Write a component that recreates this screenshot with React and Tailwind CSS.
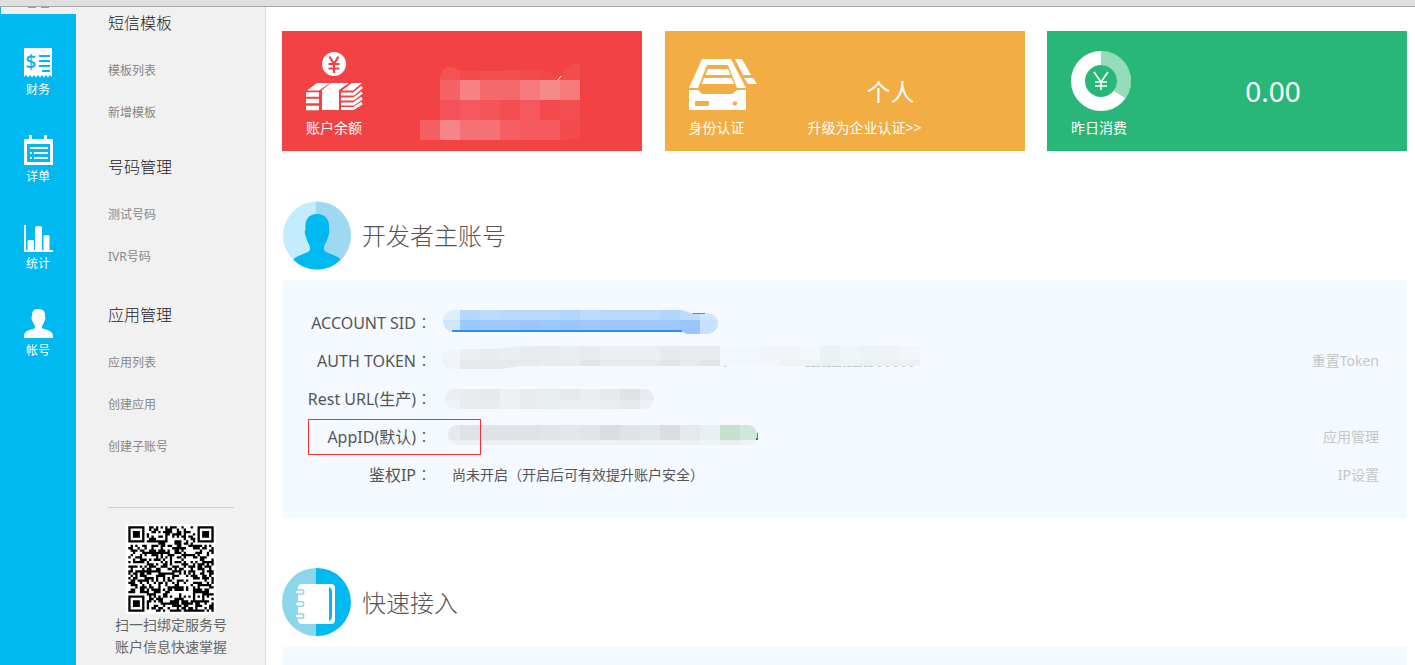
import React from "react";

const navItems = [
  { label: "财务", icon: FinanceIcon },
  { label: "详单", icon: DetailIcon },
  { label: "统计", icon: StatsIcon },
  { label: "帐号", icon: AccountIcon },
];

const menuGroups = [
  { title: "短信模板", items: ["模板列表", "新增模板"] },
  { title: "号码管理", items: ["测试号码", "IVR号码"] },
  { title: "应用管理", items: ["应用列表", "创建应用", "创建子账号"] },
];

function FinanceIcon() {
  return (
    <svg width="30" height="30" viewBox="0 0 30 30" className="shrink-0" aria-hidden="true">
      <path
        d="M2 0H28Q29 0 29 1V29L27 27L25 29.5L23 27L21 29.5L19 27L17 29.5L15 27L13 29.5L11 27L9 29.5L7 27L5 29.5L3 27L1 29V1Q1 0 2 0Z"
        fill="#fff"
      />
      <text x="2.5" y="21" fontSize="19" fontWeight="600" fill="#00b9f1" fontFamily="Open Sans, sans-serif">$</text>
      <path d="M16 8H27M16 13H27M16 18H27M19 23H27" stroke="#00b9f1" strokeWidth="2" />
    </svg>
  );
}

function DetailIcon() {
  return (
    <svg width="30" height="30" viewBox="0 0 30 30" className="shrink-0" aria-hidden="true">
      <path d="M1 4H6V0H9V4H21V0H24V4H30V9H1Z" fill="#fff" />
      <path d="M2.500 8V28.500H28.500V8" fill="none" stroke="#fff" strokeWidth="3" />
      <path d="M7 13H25M11 18H25M11 23H25M7 18H9M7 23H9" stroke="#fff" strokeWidth="2" />
    </svg>
  );
}

function StatsIcon() {
  return (
    <svg width="30" height="30" viewBox="0 0 30 30" className="shrink-0" aria-hidden="true">
      <path d="M2 3V29H30" fill="none" stroke="#fff" strokeWidth="2" />
      <rect x="4.500" y="18" width="6.500" height="11" rx="1.500" fill="#fff" />
      <rect x="12" y="4" width="7" height="25" rx="2" fill="#fff" />
      <rect x="20.500" y="13" width="6" height="16" rx="1.500" fill="#fff" />
    </svg>
  );
}

function AccountIcon() {
  return (
    <svg width="30" height="30" viewBox="0 0 30 30" className="shrink-0" aria-hidden="true">
      <path
        d="M15 0C20 0 22 2 22 6C22 8 23 8 22 11C21 14 20 15 19 17V19C22 21 30 21 30 27V29H1V27C1 21 9 21 12 19V17C11 15 10 14 9 11C8 8 9 8 9 6C9 2 11 0 15 0Z"
        fill="#fff"
      />
    </svg>
  );
}

function BalanceIcon() {
  return (
    <svg width="70" height="60" viewBox="0 0 70 60" aria-hidden="true">
      <circle cx="28" cy="13" r="12" fill="#fff" />
      <path d="M23.500 5.500L28 13L32.500 5.500M28 13V22M22.500 13H33.500M22.500 17.500H33.500" fill="none" stroke="#f34243" strokeWidth="2.200" />
      <path d="M1 39.500L11 32H24L13 39.500ZM16 39L25 32H43L33 39V59H16Z" fill="#fff" />
      <path d="M36 39.500L46 32H56L47 39.500Z" fill="#fff" />
      <path d="M0 43.500H13M0 50H13M0 57H13" stroke="#fff" strokeWidth="4.500" />
      <path
        d="M35 43H47.500L56 36M35 48H47.500L56 41.500M35 53H47.500L56 47M35 57.500H47.500L56 52"
        fill="none"
        stroke="#fff"
        strokeWidth="2.800"
      />
    </svg>
  );
}

function IdentityIcon() {
  return (
    <svg width="70" height="60" viewBox="0 0 70 60" aria-hidden="true">
      <path d="M13 8H42L57 37H48L39 14H18L9 37H0Z" fill="#fff" />
      <path d="M19 18H39L41.500 24H16.500ZM15 27H42.500L45 33H12.500Z" fill="#fff" />
      <path d="M46 8H53L62 24H54ZM55 27H64L68 33H59Z" fill="#fff" />
      <path d="M0 39H9L13 43H43L48 39H57V59H0Z" fill="#fff" />
      <rect x="6" y="50" width="14" height="5" rx="1" fill="#f2ad44" />
      <circle cx="46" cy="52.500" r="2.200" fill="#f2ad44" />
    </svg>
  );
}

function ConsumeIcon() {
  return (
    <svg width="70" height="60" viewBox="0 0 70 60" aria-hidden="true">
      <circle cx="30" cy="30" r="23" fill="none" stroke="#fff" strokeWidth="14" />
      <path d="M30 0A30 30 0 0 1 54.500 47L43 39.500A16 16 0 0 0 30 14Z" fill="#29b779" />
      <path d="M30 0A30 30 0 0 1 54.500 47L43 39.500A16 16 0 0 0 30 14Z" fill="#94dcbb" />
      <path d="M23 21L30 31L37 21M30 31V39M24 31H36M24 35H36" fill="none" stroke="#fff" strokeWidth="1.600" />
    </svg>
  );
}

function AvatarIcon() {
  return (
    <svg width="70" height="69" viewBox="0 0 70 69" aria-hidden="true">
      <defs>
        <clipPath id="avatar-circle">
          <circle cx="35" cy="34.500" r="34" />
        </clipPath>
      </defs>
      <g clipPath="url(#avatar-circle)">
        <rect width="70" height="69" fill="#c3edff" />
        <rect x="34" width="36" height="69" fill="#9fd8f1" />
        <path
          d="M35 13C43 13 47 18 47 25V29C48 30 47 34 46 36C45 41 42 44 42 46V49C44 53 58 54 60 61V69H10V61C12 54 26 53 28 49V46C28 44 25 41 24 36C23 34 22 30 23.500 29V25C23.500 18 27 13 35 13Z"
          fill="#00b9f1"
        />
      </g>
    </svg>
  );
}

function NotebookIcon() {
  return (
    <svg width="70" height="69" viewBox="0 0 70 69" aria-hidden="true">
      <path d="M34 0A34 34 0 0 0 34 68Z" fill="#8cd6ec" />
      <path d="M34 0H35A34 34 0 0 1 35 68H34Z" fill="#00b9f1" />
      <rect x="16" y="16" width="37" height="40" rx="4" fill="#fff" />
      <path d="M47 19Q50 20 50 24V48Q50 52 47 53Z" fill="#00b9f1" />
      {[24, 36, 48].map((y) => (
        <g key={y}>
          <rect x="14" y={y - 3} width="8.500" height="6" rx="3" fill="#8cd6ec" />
          <rect x="14" y={y - 1.5} width="7" height="3" rx="1.500" fill="#fff" />
        </g>
      ))}
    </svg>
  );
}

const QR_SIZE = 37;

// position and alignment squares are fixed, everything else is filled from the seed
function buildQr() {
  let seed = 20157;
  const squares = [
    [0, 0, 7],
    [30, 0, 7],
    [0, 30, 7],
    [28, 28, 5],
  ];
  let d = "";
  for (let y = 0; y < QR_SIZE; y++) {
    for (let x = 0; x < QR_SIZE; x++) {
      seed = (seed * 1103515245 + 12345) % 2147483648;
      let on = (seed >> 16) % 100 < 50;
      squares.forEach(([sx, sy, n]) => {
        const pad = n === 7 ? 1 : 0;
        if (x < sx - pad || y < sy - pad || x >= sx + n + pad || y >= sy + n + pad) return;
        const mid = (n - 1) / 2;
        const ring = Math.max(Math.abs(x - sx - mid), Math.abs(y - sy - mid));
        on = ring !== mid - 1 && ring <= mid;
      });
      if (on) d += `M${x} ${y}h1v1h-1z`;
    }
  }
  return d;
}

const qrPath = buildQr();

function QrCode() {
  return (
    <svg width="90" height="90" viewBox="-1 -1 39 39" role="img" aria-label="QR">
      <rect x="-1" y="-1" width="39" height="39" fill="#fff" />
      <path d={qrPath} fill="#000" />
    </svg>
  );
}

// blocks of 20px, one colour per block
function Mosaic({ id, width, height, clip, bands, children }) {
  return (
    <svg width={width} height={height} className="block shrink-0" aria-hidden="true">
      <clipPath id={id}>
        <path d={clip} />
      </clipPath>
      <g clipPath={`url(#${id})`} shapeRendering="crispEdges">
        {bands.map((band) =>
          band.cells.map((color, i) => (
            <rect key={band.y + "-" + i} x={i * 20} y={band.y} width="20" height={band.h} fill={color} />
          ))
        )}
      </g>
      {children}
    </svg>
  );
}

function BalanceMosaic() {
  return (
    <Mosaic
      id="m-balance"
      width={160}
      height={80}
      clip="M20 20C20 11 24 7 31 7C36 7 37 11 40 11H85L88 10H122C130 10 135 17 139 20C142 15 146 5 154 4H160V78L150 79L146 80H0V60H20Z"
      bands={[
        { y: 0, h: 20, cells: ["#f34243", "#f45254", "#f34b4d", "#f34f50", "#f34f50", "#f34b4d", "#f3484a", "#f34c4e"] },
        { y: 20, h: 20, cells: ["#f34243", "#f56266", "#f78284", "#f5696c", "#f5696c", "#f67b7e", "#f78a89", "#f67a79"] },
        { y: 40, h: 20, cells: ["#f34243", "#f4525a", "#f5595f", "#f4555b", "#f44e50", "#f5595f", "#f3494d", "#f44e50"] },
        { y: 60, h: 20, cells: ["#f55f62", "#f78486", "#f67173", "#f67173", "#f55f62", "#f55b5e", "#f55b5e", "#f34b4d"] },
      ]}
    >
      <path d="M138 20L141 16" stroke="#fff" strokeWidth="1" />
    </Mosaic>
  );
}

function SidMosaic() {
  return (
    <Mosaic
      id="m-sid"
      width={480}
      height={38}
      clip="M14 6H242L251 9H265C274 9 278 13 278 19C278 26 272 30 267 30H247L242 28H14C7 28 3 22 3 17C3 11 7 6 14 6Z"
      bands={[
        { y: 6, h: 10, cells: ["#ddeefd", "#b5d7ff", "#bcdbff", "#b9d9ff", "#b9d9ff", "#b9d9ff", "#b1d6ff", "#bcdbff", "#b9d9ff", "#b9d9ff", "#b9d9ff", "#b1d5ff", "#bcdbff", "#cfe4ff"] },
        { y: 16, h: 14, cells: ["#d0e6fc", "#9ac9ff", "#a0caff", "#a0caff", "#9ac6ff", "#9ac9ff", "#9ac6ff", "#a0caff", "#9ac9ff", "#9cc7ff", "#a0caff", "#a0caff", "#9ac6ff", "#c8e1ff"] },
      ]}
    >
      <rect x="12" y="26" width="230" height="2" fill="#2b8cff" />
      <rect x="253" y="9" width="12" height="1" fill="#2b8cff" />
    </Mosaic>
  );
}

function TokenMosaic() {
  return (
    <Mosaic
      id="m-token"
      width={490}
      height={38}
      clip="M12 7H55L80 4H480V24H80L60 27H14C6 27 2 23 2 17C2 12 5 7 12 7Z"
      bands={[
        { y: 4, h: 14, cells: ["#f1f5f9", "#ebeff2", "#e8ecef", "#e9eef0", "#e7ebee", "#e8ecef", "#e8edf0", "#e7ebee", "#ebeff2", "#ebeff2", "#ebeff2", "#e6eaed", "#e8ecef", "#e8ecef", "#f2f7fb", "#f2f7fb", "#f0f4f7", "#f0f4f7", "#f2f7fb", "#ecf1f4", "#f0f5f8", "#edf2f5", "#eef2f5", "#f2f6fa"] },
        { y: 18, h: 10, cells: ["#eff4f7", "#e6eaed", "#e6eaed", "#e6eaed", "#e6eaed", "#e8ecef", "#e8ecef", "#e1e5e8", "#e6eaed", "#e6eaed", "#e6eaed", "#e1e5e8", "#e6eaed", "#e1e5e8", "#f2f7fb", "#f2f7fb", "#f2f7fb", "#edf2f5", "#edf2f5", "#ebf0f3", "#edf2f5", "#ebf0f3", "#ebf0f3", "#edf1f4"] },
      ]}
    >
      <path d="M284 24.500H286M365 24.500H433" stroke="#c6cacd" strokeWidth="1" strokeDasharray="5 1 9 2 3 1" />
      <path d="M438 24.500H476" stroke="#c9cdd0" strokeWidth="1" strokeDasharray="3 5" />
    </Mosaic>
  );
}

function UrlMosaic() {
  return (
    <Mosaic
      id="m-url"
      width={480}
      height={38}
      clip="M15 9H203C210 9 214 14 214 19C214 25 209 29 203 29H15C9 29 5 24 5 19C5 14 9 9 15 9Z"
      bands={[
        { y: 9, h: 11, cells: ["#ebeff2", "#e8ecef", "#e5e9ec", "#edf1f4", "#e8ecef", "#e8edf0", "#e5e9ec", "#eaeef1", "#e5e9ec", "#dfe3e6", "#e8ecef"] },
        { y: 20, h: 9, cells: ["#edf2f5", "#e8ecef", "#e8ecef", "#edf1f4", "#e8ecef", "#e8edf0", "#ebeff2", "#ebeff2", "#eaeef1", "#e6eaed", "#edf1f4"] },
      ]}
    />
  );
}

function AppIdMosaic() {
  return (
    <Mosaic
      id="m-appid"
      width={480}
      height={38}
      clip="M17 7H308C314 7 318 14 318 20C318 24 312 27 306 27H17C11 26 8 21 8 17C8 11 12 7 17 7Z"
      bands={[
        { y: 7, h: 15, cells: ["#e6eaed", "#dfe3e6", "#dfe3e6", "#dfe3e6", "#dfe3e6", "#e1e5e8", "#e3e7ea", "#e1e5e8", "#dadee1", "#dfe3e6", "#e1e6e8", "#dadee1", "#e5e9ec", "#e8f0f2", "#c6e0ce", "#cfe6da"] },
        { y: 22, h: 5, cells: ["#edf2f5", "#ebf0f3", "#ebf0f3", "#ebf0f3", "#ebf0f3", "#ebf0f3", "#ebf0f3", "#ebf0f3", "#edf2f5", "#ebf0f3", "#edf2f5", "#edf2f5", "#ebf0f3", "#edf5f7", "#e6f1ef", "#ebf5f7"] },
      ]}
    >
      <rect x="317" y="15" width="1" height="7" fill="#209aa8" />
      <rect x="316" y="20" width="1" height="2" fill="#1c7a2c" />
    </Mosaic>
  );
}

const StatCard = ({ color, label, icon: Icon, children }) => {
  return (
    <section className={`flex h-[120px] w-[32%] text-white ${color}`}>
      <div className="w-[92px] shrink-0 pl-6 pt-5">
        <Icon />
        <h3 className="whitespace-nowrap text-sm leading-[34px]">{label}</h3>
      </div>
      <div className="flex-1">{children}</div>
    </section>
  );
};

const SectionTitle = ({ icon: Icon, children }) => {
  return (
    <div className="mb-[10px] mt-[50px] flex items-center gap-[10px]">
      <Icon />
      <h2 className="text-2xl font-light leading-9 text-[#555]">{children}</h2>
    </div>
  );
};

const Row = ({ label, action, boxed, children }) => {
  return (
    <div className="relative flex h-[38px] items-center">
      {boxed && <div className="absolute left-[26px] top-px h-9 w-[173px] border border-[#ff2d2d]"></div>}
      <dt className="w-[150px] shrink-0 whitespace-nowrap pb-0.5 text-right text-base text-[#555]">
        {label}
        <span className="font-['Noto_Sans_CJK_JP',sans-serif] font-light">：</span>
      </dt>
      <dd className="flex-1 pl-2">{children}</dd>
      {action && (
        <a href="#" className="pr-7 text-sm text-[#c6c6c6]">
          {action}
        </a>
      )}
    </div>
  );
};

const App = () => {
  return (
    <div className="flex h-screen flex-col overflow-hidden bg-white font-['Noto_Sans','Noto_Sans_CJK_SC',sans-serif]">
      <div className="h-[7px] shrink-0 border-b border-[#a9a9a9] bg-[#dfdfdf]"></div>
      <div className="flex min-h-0 flex-1">
        <nav className="w-[76px] shrink-0 bg-[#00b9f1]">
          <div className="flex h-[7px] justify-center gap-[5px] border-l border-[#00b9f1] bg-[#f1f1f1]">
            <span className="h-px w-2 bg-[#4bb8dc]"></span>
            <span className="h-px w-2 bg-[#4bb8dc]"></span>
          </div>
          {navItems.map(({ label, icon: Icon }) => (
            <a key={label} href="#" className="flex h-[87px] flex-col items-center pt-[34px] text-xs text-white">
              <Icon />
              <span className="leading-6">{label}</span>
            </a>
          ))}
        </nav>

        <aside className="w-[190px] shrink-0 overflow-hidden border-r border-[#dcdcdc] bg-[#f1f1f1] pl-8">
          {menuGroups.map((group) => (
            <div key={group.title} className="mb-[22px] first:mb-[18px]">
              <h3 className="mb-[10px] text-base font-light leading-8 text-[#222]">{group.title}</h3>
              <ul>
                {group.items.map((item) => (
                  <li key={item} className="h-[42px]">
                    <a href="#" className="block text-xs leading-[44px] text-[#888]">
                      {item}
                    </a>
                  </li>
                ))}
              </ul>
            </div>
          ))}
          <div className="mt-10 flex w-[126px] flex-col items-center border-t border-[#cfcfcf] pt-4">
            <QrCode />
            <p className="text-center text-sm leading-[22px] text-[#666]">
              扫一扫绑定服务号
              <br />
              账户信息快速掌握
            </p>
          </div>
        </aside>

        <main className="min-w-0 flex-1 overflow-hidden pl-4 pr-2 pt-6">
          <div className="flex justify-between">
            <StatCard color="bg-[#f34243]" label="账户余额" icon={BalanceIcon}>
              <div className="pl-[46px] pt-[29px]">
                <BalanceMosaic />
              </div>
            </StatCard>
            <StatCard color="bg-[#f2ad44]" label="身份认证" icon={IdentityIcon}>
              <p className="pt-10 text-center text-2xl leading-[42px]">个人</p>
              <a href="#" className="block pl-[51px] text-sm leading-[30px]">
                升级为企业认证&gt;&gt;
              </a>
            </StatCard>
            <StatCard color="bg-[#29b779]" label="昨日消费" icon={ConsumeIcon}>
              <p className="pt-10 text-center text-[28px] leading-10">0.00</p>
            </StatCard>
          </div>

          <SectionTitle icon={AvatarIcon}>开发者主账号</SectionTitle>
          <dl className="bg-[#f4faff] py-6">
            <Row label="ACCOUNT SID">
              <SidMosaic />
            </Row>
            <Row label="AUTH TOKEN" action="重置Token">
              <TokenMosaic />
            </Row>
            <Row label="Rest URL(生产)">
              <UrlMosaic />
            </Row>
            <Row label="AppID(默认)" action="应用管理" boxed>
              <AppIdMosaic />
            </Row>
            <Row label="鉴权IP" action="IP设置">
              <p className="pl-3 text-sm text-[#555]">尚未开启（开启后可有效提升账户安全）</p>
            </Row>
          </dl>

          <SectionTitle icon={NotebookIcon}>快速接入</SectionTitle>
          <div className="h-[238px] bg-[#f4faff]"></div>
        </main>
      </div>
    </div>
  );
};

export default App;
